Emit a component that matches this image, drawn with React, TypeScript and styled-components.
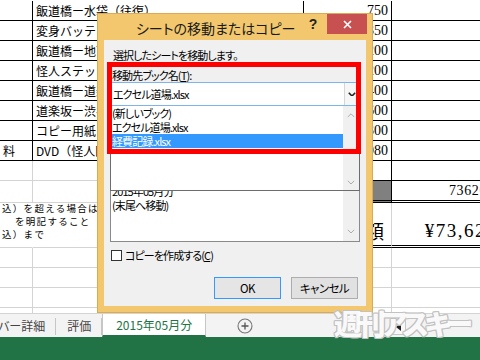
import React from 'react';
import styled, { createGlobalStyle } from 'styled-components';

const JP = `"Noto Sans CJK JP", "Noto Sans", sans-serif`;
const SERIF = `"Liberation Serif", "Noto Sans CJK JP", serif`;

const Global = createGlobalStyle`
  html, body { margin: 0; padding: 0; background: #fff; }
  body { width: 480px; height: 360px; overflow: hidden; }
  * { box-sizing: border-box; }
`;

type Line = 'dark' | 'light' | 'none';
type Bottom = Line | 'double';
const lc = (l: Line) => (l === 'dark' ? '#000' : l === 'light' ? '#d4d4d4' : 'transparent');

const Screen = styled.div`
  position: relative;
  width: 480px;
  height: 360px;
  overflow: hidden;
  display: flex;
  flex-direction: column;
  background: #fff;
  font-family: ${JP};
`;

const Sheet = styled.div`
  height: 313px;
  flex: none;
  overflow: hidden;
`;

const Grid = styled.div`
  width: 512px;
  padding-top: 1px;
  display: grid;
  grid-template-columns: 33px 271px 88px 120px;
  grid-template-rows: repeat(9, 20px) 22px 45px repeat(4, 20px);
`;

const Cell = styled.div<{ $right: Line; $bottom: Bottom; $align?: 'left' | 'right'; $fill?: string; $num?: boolean; $pr?: number }>`
  border-right: 1px solid ${(p) => lc(p.$right)};
  border-bottom: ${(p) => (p.$bottom === 'double' ? '3px double #000' : `1px solid ${lc(p.$bottom)}`)};
  background: ${(p) => p.$fill ?? 'transparent'};
  display: flex;
  align-items: center;
  justify-content: ${(p) => (p.$align === 'right' ? 'flex-end' : 'flex-start')};
  padding: 0 ${(p) => p.$pr ?? 3}px 0 3px;
  white-space: nowrap;
  overflow: visible;
  font-family: ${(p) => (p.$num ? SERIF : JP)};
  font-size: ${(p) => (p.$num ? '14px' : '12px')};
  color: #000;
`;

const NoteText = styled.div`
  align-self: flex-start;
  margin-top: -1px;
  margin-left: -1px;
  font-size: 9.5px;
  letter-spacing: 1.3px;
  line-height: 13px;
  display: flex;
  flex-direction: column;
`;

const NoteLine = styled.span<{ $indent?: number }>`
  padding-left: ${(p) => p.$indent ?? 0}px;
`;

const BigLabel = styled.span`
  font-size: 19px;
  margin-top: 12px;
`;

const BigAmount = styled.span`
  font-family: ${SERIF};
  font-size: 19px;
  letter-spacing: 1.5px;
  margin-top: 14px;
`;

const Total = styled.span`
  font-family: ${SERIF};
  font-size: 14px;
  letter-spacing: 0.6px;
`;

/* ---------- dialog ---------- */

const Dialog = styled.div`
  position: absolute;
  left: 97px;
  top: 13px;
  width: 276px;
  height: 300px;
  border: 1px solid #dcab50;
  background: #f2c76e;
  display: flex;
  flex-direction: column;
  font-family: ${JP};
  font-feature-settings: 'palt';
  z-index: 5;
`;

const TitleBar = styled.div`
  height: 26px;
  flex: none;
  display: flex;
  align-items: flex-start;
`;

const Title = styled.div`
  flex: 1;
  padding-left: 38px;
  font-size: 14px;
  line-height: 29px;
  color: #1a1a1a;
`;

const Help = styled.div`
  width: 14px;
  margin-right: 7px;
  font-family: "Liberation Sans", sans-serif;
  font-weight: bold;
  font-size: 14px;
  line-height: 20px;
  text-align: center;
  color: #222;
`;

const Close = styled.div`
  width: 40px;
  height: 20px;
  margin-right: 5px;
  background: #c75050;
  display: flex;
  align-items: center;
  justify-content: center;
`;

const Body = styled.div`
  position: relative;
  flex: 1;
  margin: 0 6px 6px;
  padding: 8px 6px 7px;
  background: #f0f0f0;
  display: flex;
  flex-direction: column;
  font-size: 11px;
  letter-spacing: -0.9px;
  color: #000;
`;

const Text = styled.div<{ $mt?: number; $pl?: number }>`
  margin-top: ${(p) => p.$mt ?? 0}px;
  padding-left: ${(p) => p.$pl ?? 0}px;
  line-height: 14px;
  height: 14px;
  white-space: nowrap;
`;

const U = styled.span`
  text-decoration: underline;
  text-underline-offset: 1px;
`;

const ComboWrap = styled.div`
  position: relative;
  height: 24px;
  flex: none;
`;

const Combo = styled.div`
  height: 24px;
  border: 1px solid #7eb4ea;
  background: #fff;
  display: flex;
  align-items: center;
  padding-left: 2px;
`;

const ComboText = styled.span`
  flex: 1;
`;

const ArrowBox = styled.div`
  width: 15px;
  height: 100%;
  border-left: 1px solid #d6d6d6;
  background: #f6f6f6;
  display: flex;
  align-items: center;
  justify-content: center;
`;

const DropList = styled.div`
  position: absolute;
  top: 100%;
  left: 0;
  right: 0;
  height: 85px;
  background: #fff;
  border: 1px solid #6d6d6d;
  border-top: none;
  display: flex;
  z-index: 2;
`;

const Items = styled.div<{ $offset?: number }>`
  flex: 1;
  display: flex;
  flex-direction: column;
  overflow: hidden;
  padding-top: ${(p) => p.$offset ?? 0}px;
`;

const Item = styled.div<{ $selected?: boolean }>`
  height: 14px;
  line-height: 14px;
  padding-left: 1px;
  white-space: nowrap;
  overflow: hidden;
  background: ${(p) => (p.$selected ? '#3399ff' : 'transparent')};
  color: ${(p) => (p.$selected ? '#fff' : '#000')};
`;

const ScrollCol = styled.div<{ $pt: number; $pb: number }>`
  width: 16px;
  background: #f0f0f0;
  display: flex;
  flex-direction: column;
  justify-content: space-between;
  align-items: center;
  padding: ${(p) => p.$pt}px 0 ${(p) => p.$pb}px;
`;

const ListBox = styled.div`
  margin-top: 21px;
  height: 115px;
  flex: none;
  border: 1px solid #8a8a8a;
  background: #fff;
  display: flex;
`;

const CheckRow = styled.div`
  margin-top: 6px;
  height: 14px;
  display: flex;
  align-items: center;
  gap: 3px;
  line-height: 14px;
`;

const CheckBox = styled.div`
  width: 11px;
  height: 11px;
  margin-left: 1px;
  border: 1px solid #333;
  background: #fff;
`;

const ButtonRow = styled.div`
  margin-top: 15px;
  display: flex;
  justify-content: flex-end;
  gap: 10px;
  padding-right: 2px;
`;

const Button = styled.div<{ $default?: boolean }>`
  width: 67px;
  height: 22px;
  border: 1px solid ${(p) => (p.$default ? '#3399ff' : '#adadad')};
  background: ${(p) => (p.$default ? '#e5e5e5' : '#e1e1e1')};
  display: flex;
  align-items: center;
  justify-content: center;
  font-size: 11.5px;
  letter-spacing: -0.6px;
`;

const RedMark = styled.div`
  position: absolute;
  left: 3px;
  top: 22px;
  width: 254px;
  height: 92px;
  border: 5px solid #ff0000;
  z-index: 3;
  pointer-events: none;
`;

/* ---------- tabs ---------- */

const TabBar = styled.div`
  height: 24px;
  flex: none;
  border-top: 1px solid #d4d4d4;
  background: #f3f3f3;
  display: flex;
  align-items: stretch;
  font-size: 12px;
  font-feature-settings: 'palt';
  color: #444;
`;

const Tab = styled.div<{ $active?: boolean; $pl: number; $pr: number; $ml?: number }>`
  position: relative;
  margin-left: ${(p) => p.$ml ?? 0}px;
  padding: 0 ${(p) => p.$pr}px 0 ${(p) => p.$pl}px;
  display: flex;
  align-items: center;
  white-space: nowrap;
  background: ${(p) => (p.$active ? '#fff' : 'transparent')};
  color: ${(p) => (p.$active ? '#217346' : '#444')};
  border-left: ${(p) => (p.$active ? '1px solid #c6c6c6' : 'none')};
  border-right: ${(p) => (p.$active ? '1px solid #c6c6c6' : 'none')};
  border-bottom: ${(p) => (p.$active ? '2px solid #217346' : 'none')};
  &::after {
    content: '';
    display: ${(p) => (p.$active ? 'none' : 'block')};
    position: absolute;
    right: 0;
    top: 4px;
    bottom: 2px;
    width: 1px;
    background: #c6c6c6;
  }
`;

const AddTab = styled.div`
  margin-left: 31px;
  display: flex;
  align-items: center;
`;

const Dots = styled.div`
  margin-left: 125px;
  align-self: center;
  width: 2px;
  height: 12px;
  border-left: 2px dotted #8a8a8a;
`;

const ScrollBtn = styled.div`
  margin-left: 11px;
  margin-top: 5px;
  width: 15px;
  height: 16px;
  border: 1px solid #c6c6c6;
  background: #f8f8f8;
  display: flex;
  align-items: center;
  justify-content: center;
`;

const Status = styled.div`
  height: 23px;
  flex: none;
  background: #217346;
`;

const Watermark = styled.div`
  position: absolute;
  left: 334px;
  top: 306px;
  font-family: ${JP};
  font-feature-settings: 'palt';
  font-weight: 900;
  font-size: 28px;
  letter-spacing: -4.5px;
  line-height: 34px;
  color: rgba(255, 255, 255, 0.92);
  text-shadow: 1px 0 0 #c2c2c2, -1px 0 0 #c2c2c2, 0 1px 0 #c2c2c2, 0 -1px 0 #c2c2c2,
    1px 1px 0 #c2c2c2, -1px -1px 0 #c2c2c2, 1px -1px 0 #c2c2c2, -1px 1px 0 #c2c2c2;
  z-index: 6;
  pointer-events: none;
`;

/* ---------- icons ---------- */

const Chevron = ({ dir, color, w = 8, sw = 1.2 }: { dir: 'up' | 'down'; color: string; w?: number; sw?: number }) => (
  <svg width={w} height={w * 0.6} viewBox="0 0 10 6">
    <polyline
      points={dir === 'down' ? '1,1 5,5 9,1' : '1,5 5,1 9,5'}
      fill="none"
      stroke={color}
      strokeWidth={sw}
    />
  </svg>
);

const CloseX = () => (
  <svg width="9" height="9" viewBox="0 0 9 9">
    <path d="M1 1 L8 8 M8 1 L1 8" stroke="#fff" strokeWidth="1.6" />
  </svg>
);

const PlusCircle = () => (
  <svg width="16" height="16" viewBox="0 0 16 16">
    <circle cx="8" cy="8" r="7" fill="none" stroke="#777" strokeWidth="1.1" />
    <path d="M8 4.5 V11.5 M4.5 8 H11.5" stroke="#555" strokeWidth="1.3" />
  </svg>
);

const LeftTri = () => (
  <svg width="6" height="8" viewBox="0 0 6 8">
    <polygon points="5,0 5,8 0,4" fill="#222" />
  </svg>
);

/* ---------- data ---------- */

const rows: [string, string, string][] = [
  ['', '飯道橋ー水袋（往復）', '750'],
  ['', '変身バッテリー', '350'],
  ['', '飯道橋ー地下鉄', '200'],
  ['', '怪人ステッカー', '200'],
  ['', '飯道橋ー道楽坂', '400'],
  ['', '道楽坂ー渋谷', '600'],
  ['', 'コピー用紙', '300'],
  ['料', 'DVD（怪人図鑑）', '980'],
];

const visibleSheets = ['2015年05月分', '(末尾へ移動)'];

export default function App() {
  return (
    <Screen>
      <Global />
      <Sheet>
        <Grid>
          {rows.map(([a, b, c], i) => (
            <React.Fragment key={i}>
              <Cell $right="dark" $bottom="dark">{a}</Cell>
              <Cell $right="dark" $bottom="dark">{b}</Cell>
              <Cell $right="dark" $bottom="dark" $align="right" $num>{c}</Cell>
              <Cell $right="none" $bottom="dark" />
            </React.Fragment>
          ))}
          <Cell $right="light" $bottom="light" />
          <Cell $right="dark" $bottom="light" />
          <Cell $right="dark" $bottom="dark" />
          <Cell $right="none" $bottom="dark" />

          <Cell $right="light" $bottom="light" />
          <Cell $right="light" $bottom="light" />
          <Cell $right="dark" $bottom="double" $fill="#808080" />
          <Cell $right="none" $bottom="double" $align="right" $pr={24}>
            <Total>73620</Total>
          </Cell>

          <Cell $right="none" $bottom="light">
            <NoteText>
              <NoteLine>込）を超える場合は</NoteLine>
              <NoteLine $indent={13}>を明記すること</NoteLine>
              <NoteLine>込）まで</NoteLine>
            </NoteText>
          </Cell>
          <Cell $right="light" $bottom="light" />
          <Cell $right="light" $bottom="double" $align="right" $pr={7}>
            <BigLabel>合計金額</BigLabel>
          </Cell>
          <Cell $right="none" $bottom="double" $align="right" $pr={14}>
            <BigAmount>¥73,620</BigAmount>
          </Cell>

          {[0, 1, 2, 3].map((r) => (
            <React.Fragment key={'e' + r}>
              <Cell $right="light" $bottom="light" />
              <Cell $right="light" $bottom="light" />
              <Cell $right="light" $bottom="light" />
              <Cell $right="none" $bottom="light" />
            </React.Fragment>
          ))}
        </Grid>
      </Sheet>

      <TabBar>
        <Tab $pl={0} $pr={11} $ml={-2}>バー詳細</Tab>
        <Tab $pl={11} $pr={11}>評価</Tab>
        <Tab $active $pl={13} $pr={13}>2015年05月分</Tab>
        <AddTab>
          <PlusCircle />
        </AddTab>
        <Dots />
        <ScrollBtn>
          <LeftTri />
        </ScrollBtn>
      </TabBar>
      <Status />

      <Dialog>
        <TitleBar>
          <Title>シートの移動またはコピー</Title>
          <Help>?</Help>
          <Close>
            <CloseX />
          </Close>
        </TitleBar>
        <Body>
          <Text $pl={3}>選択したシートを移動します。</Text>
          <Text $mt={6} $pl={2}>
            移動先ブック名(<U>T</U>):
          </Text>
          <ComboWrap>
            <Combo>
              <ComboText>エクセル道場.xlsx</ComboText>
              <ArrowBox>
                <Chevron dir="down" color="#222" w={8} sw={2} />
              </ArrowBox>
            </Combo>
            <DropList>
              <Items>
                <Item>(新しいブック)</Item>
                <Item>エクセル道場.xlsx</Item>
                <Item $selected>経費記録.xlsx</Item>
              </Items>
              <ScrollCol $pt={7} $pb={5}>
                <Chevron dir="up" color="#a8a8a8" />
                <Chevron dir="down" color="#a8a8a8" />
              </ScrollCol>
            </DropList>
          </ComboWrap>
          <ListBox>
            <Items $offset={56}>
              {visibleSheets.map((s) => (
                <Item key={s}>{s}</Item>
              ))}
            </Items>
            <ScrollCol $pt={6} $pb={7}>
              <Chevron dir="up" color="#a8a8a8" />
              <Chevron dir="down" color="#a8a8a8" />
            </ScrollCol>
          </ListBox>
          <CheckRow>
            <CheckBox />
            <span>
              コピーを作成する(<U>C</U>)
            </span>
          </CheckRow>
          <ButtonRow>
            <Button $default>OK</Button>
            <Button>キャンセル</Button>
          </ButtonRow>
          <RedMark />
        </Body>
      </Dialog>

      <Watermark>週刊アスキー</Watermark>
    </Screen>
  );
}
